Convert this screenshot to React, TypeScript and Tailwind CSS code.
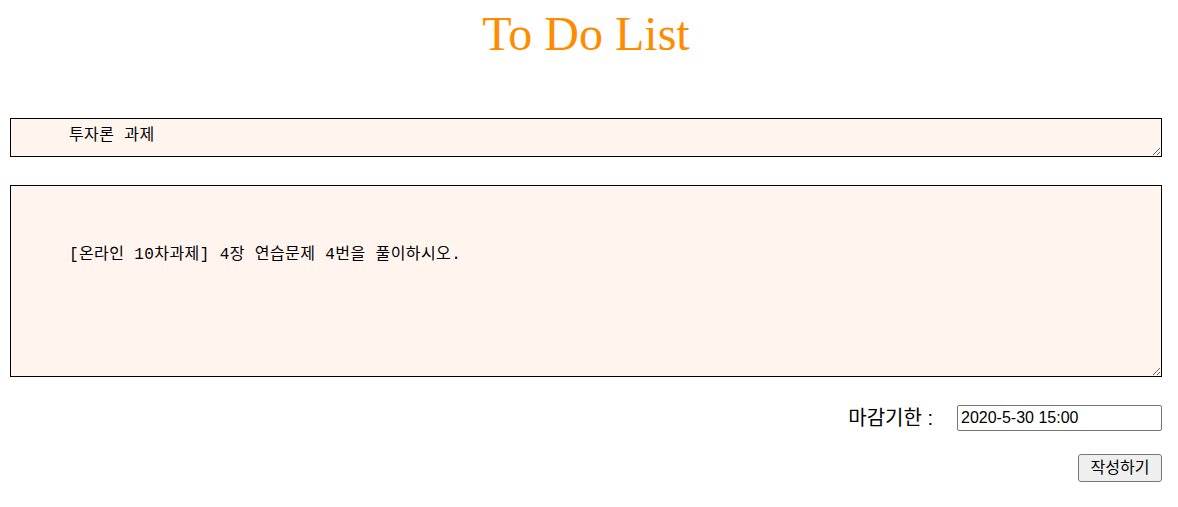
import React, { useState } from 'react';

export default function App() {
  const [title, setTitle] = useState("투자론 과제");
  const [content, setContent] = useState("[온라인 10차과제] 4장 연습문제 4번을 풀이하시오.");
  const [deadline, setDeadline] = useState("2020-5-30 15:00");

  const areaCls =
    "block w-full resize-y border border-black bg-[#fff4ee] pl-[58px] text-[16px] leading-[19px] tracking-[0.4px] text-black outline-none font-['Liberation_Mono','Noto_Sans_CJK_KR',monospace]";

  return (
    <div className="min-h-screen bg-white pl-[10px] pr-[16px] font-['Liberation_Sans','Noto_Sans_CJK_KR',sans-serif]">
      <h1 className="pt-[6px] text-center text-[48px] leading-[55px] text-[#ff8c00] font-['Liberation_Serif',serif]">
        To Do List
      </h1>

      <textarea
        value={title}
        onChange={(e) => setTitle(e.target.value)}
        className={"mt-[57px] h-[39px] pt-[8px] " + areaCls}
      />

      <textarea
        value={content}
        onChange={(e) => setContent(e.target.value)}
        className={"mt-[28px] h-[192px] pt-[60px] " + areaCls}
      />

      <div className="mt-[28px] flex h-[26px] items-center justify-end">
        <label className="mr-[24px] text-[20px] leading-[26px] text-black">마감기한 :</label>
        <input
          value={deadline}
          onChange={(e) => setDeadline(e.target.value)}
          className="h-[26px] w-[205px] rounded-[2px] border border-[#767676] px-[3px] text-[16px] text-black outline-none"
        />
      </div>

      <div className="mt-[23px] flex justify-end">
        <button className="h-[28px] w-[84px] rounded-[3px] border border-[#767676] bg-[#efefef] text-[16px] text-black">
          작성하기
        </button>
      </div>
    </div>
  );
}
